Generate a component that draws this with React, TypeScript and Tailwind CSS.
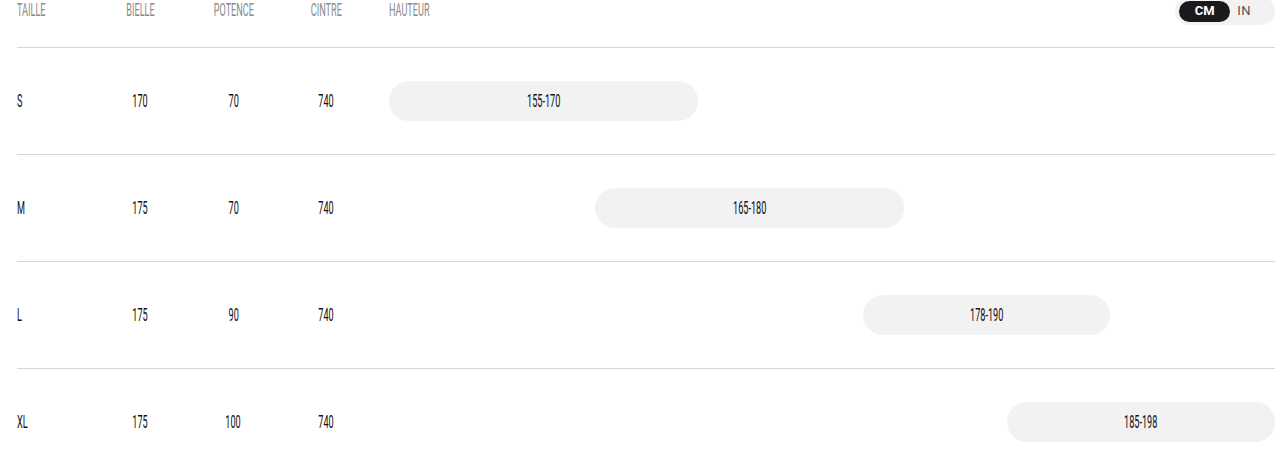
import React from 'react';

type Row = { size: string; bielle: number; potence: number; cintre: number; min: number; max: number };

const ROWS: Row[] = [
  { size: 'S', bielle: 170, potence: 70, cintre: 740, min: 155, max: 170 },
  { size: 'M', bielle: 175, potence: 70, cintre: 740, min: 165, max: 180 },
  { size: 'L', bielle: 175, potence: 90, cintre: 740, min: 178, max: 190 },
  { size: 'XL', bielle: 175, potence: 100, cintre: 740, min: 185, max: 198 },
];

const SCALE_MIN = 155;
const SCALE_MAX = 198;

const font = { fontFamily: 'Roboto, "Liberation Sans", sans-serif' };

// narrow display type, squeezed horizontally
const Cond: React.FC<{ children: React.ReactNode; left?: boolean }> = ({ children, left }) => (
  <span className={`inline-block scale-x-[0.48] whitespace-nowrap ${left ? 'origin-left' : 'origin-center'}`}>
    {children}
  </span>
);

const UnitToggle: React.FC = () => (
  <div className="-mt-[3px] flex h-[28px] items-center rounded-full bg-[#f2f2f2] p-[4px] pr-[24px]">
    <span className="flex h-[21px] w-[51px] items-center justify-center rounded-full bg-[#1a1a1a] text-[13px] font-bold text-white">
      CM
    </span>
    <span className="ml-[7px] text-[13px] font-normal tracking-[0.5px] text-[#555]">IN</span>
  </div>
);

const App: React.FC = () => {
  const span = SCALE_MAX - SCALE_MIN;
  return (
    <div className="min-h-screen bg-white pl-[17px] pr-[2px]" style={font}>
      {/* Header */}
      <div className="grid h-[48px] grid-cols-[77px_93px_93px_93px_1fr] border-b border-[#d6d6d6] text-[19px] font-normal leading-[20px] text-[#8a8a8a]">
        <div><Cond left>TAILLE</Cond></div>
        <div className="text-center"><Cond>BIELLE</Cond></div>
        <div className="text-center"><Cond>POTENCE</Cond></div>
        <div className="text-center"><Cond>CINTRE</Cond></div>
        <div className="ml-[16px] flex items-start justify-between">
          <Cond left>HAUTEUR</Cond>
          <UnitToggle />
        </div>
      </div>

      {/* Rows */}
      {ROWS.map((r) => (
        <div
          key={r.size}
          className="grid h-[107px] grid-cols-[77px_93px_93px_93px_1fr] items-center border-b border-[#d6d6d6] text-[19px] font-normal leading-[20px] text-[#111]"
        >
          <div><Cond left>{r.size}</Cond></div>
          <div className="text-center"><Cond>{r.bielle}</Cond></div>
          <div className="text-center"><Cond>{r.potence}</Cond></div>
          <div className="text-center"><Cond>{r.cintre}</Cond></div>
          <div className="ml-[16px] flex">
            <div
              className="flex h-[40px] items-center justify-center rounded-full bg-[#f2f2f2]"
              style={{
                marginLeft: `${((r.min - SCALE_MIN) / span) * 100}%`,
                width: `${((r.max - r.min) / span) * 100}%`,
              }}
            >
              <Cond>{`${r.min}-${r.max}`}</Cond>
            </div>
          </div>
        </div>
      ))}
    </div>
  );
};

export default App;
